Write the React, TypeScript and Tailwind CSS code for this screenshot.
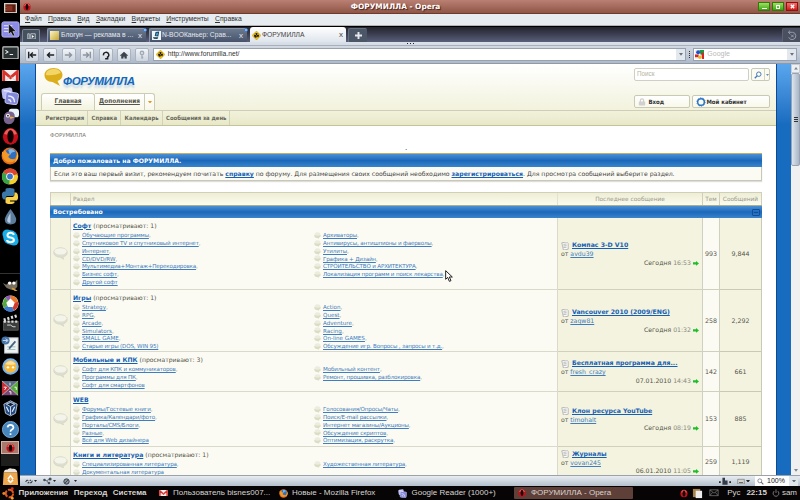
import React from "react";

type Align = { className?: string };

interface Topic {
  title: string;
  author: string;
  day: string;
  time: string;
}

interface Forum {
  name: string;
  viewing?: number;
  height: string;
  left: string[];
  right: string[];
  last: Topic;
  threads: string;
  posts: string;
}

const forums: Forum[] = [
  {
    name: "Софт",
    viewing: 1,
    height: "h-[72px]",
    left: [
      "Обучающие программы",
      "Спутниковое TV и спутниковый интернет",
      "Интернет",
      "CD/DVD/RW",
      "Мультимедиа+Монтаж+Перекодировка",
      "Бизнес софт",
      "Другой софт",
    ],
    right: [
      "Архиваторы",
      "Антивирусы, антишпионы и фаерволы",
      "Утилиты",
      "Графика + Дизайн",
      "СТРОИТЕЛЬСТВО и АРХИТЕКТУРА",
      "Локализация программ и поиск лекарства",
    ],
    last: { title: "Компас 3-D V10", author: "avdu39", day: "Сегодня", time: "16:53" },
    threads: "993",
    posts: "9,844",
  },
  {
    name: "Игры",
    viewing: 1,
    height: "h-[62px]",
    left: ["Strategy", "RPG", "Arcade", "Simulators", "SMALL GAME", "Старые игры (DOS, WIN 95)"],
    right: ["Action", "Quest", "Adventure", "Racing", "On-line GAMES", "Обсуждение игр. Вопросы , запросы и т.д."],
    last: { title: "Vancouver 2010 (2009/ENG)", author: "zaqw81", day: "Сегодня", time: "01:32" },
    threads: "258",
    posts: "2,292",
  },
  {
    name: "Мобильные и КПК",
    viewing: 3,
    height: "h-[40px]",
    left: ["Софт для КПК и коммуникаторов", "Программы для ПК", "Софт для смартфонов"],
    right: ["Мобильный контент", "Ремонт, прошивка, разблокировка"],
    last: { title: "Бесплатная программа для...", author: "fresh_crazy", day: "07.01.2010", time: "14:43" },
    threads: "142",
    posts: "661",
  },
  {
    name: "WEB",
    height: "h-[55px]",
    left: ["Форумы/Гостевые книги", "Графика/Календари/фото", "Порталы/CMS/Блоги", "Разные", "Всё для Web дизайнера"],
    right: [
      "Голосования/Опросы/Чаты",
      "Поиск/E-mail рассылки",
      "Интернет магазины/Аукционы",
      "Обсуждение скриптов",
      "Оптимизация, раскрутка",
    ],
    last: { title: "Клон ресурса YouTube", author: "timohalt", day: "Сегодня", time: "08:19" },
    threads: "153",
    posts: "885",
  },
  {
    name: "Книги и литература",
    viewing: 1,
    height: "h-[31px]",
    left: ["Специализированная литература", "Документальная литература"],
    right: ["Художественная литература"],
    last: { title: "Журналы", author: "vovan245", day: "06.01.2010", time: "11:05" },
    threads: "259",
    posts: "1,119",
  },
];

const Opera = ({ className }: Align) => (
  <svg viewBox="0 0 20 20" className={className}>
    <ellipse cx="10" cy="10" rx="9" ry="9.6" fill="#c4101a" />
    <path d="M2.500 7Q5 .5 10 .5T17.500 7L14 8Q13 2.500 10 2.500T6 8z" fill="#e8605c" />
    <ellipse cx="10" cy="10" rx="3.6" ry="7.4" fill="#0c0202" />
  </svg>
);

const Gmail = ({ className }: Align) => (
  <svg viewBox="0 0 20 14" className={className}>
    <rect width="20" height="14" rx="1.5" fill="#f5f0f0" />
    <path d="M2 14V2l8 7 8-7v12" fill="none" stroke="#d8332c" strokeWidth="3.4" />
    <path d="M4 13l5-5M16 13l-5-5" stroke="#d9c4c2" />
  </svg>
);

const Reader = ({ className }: Align) => (
  <svg viewBox="0 0 20 20" className={className}>
    <rect x="1" y="1" width="12" height="12" rx="2.5" fill="#b9bdf0" transform="rotate(-8 7 7)" />
    <rect x="5" y="6" width="14" height="13" rx="2.5" fill="#8288d8" stroke="#c9cdf6" transform="rotate(8 12 12)" />
    <g fill="none" stroke="#eef" strokeWidth="1.5">
      <path d="M8 10q7 0 7 7M8 14q3 0 3 3M3 4q6 0 8 2" />
    </g>
  </svg>
);

const Firefox = ({ className }: Align) => (
  <svg viewBox="0 0 20 20" className={className}>
    <circle cx="10" cy="10" r="9.4" fill="#e5701a" />
    <circle cx="11" cy="8" r="6.4" fill="#2f6fc0" />
    <path d="M8 3q5-2 8 2l-4 1-2 3z" fill="#7db5e8" />
    <path d="M1 5l2 1 1-3 3 4 3 1-2 3q3 4 9 2-4 6-11 3Q1 13 1 5z" fill="#f39a26" />
    <path d="M17 4q5 8-2 13 4-6 2-13z" fill="#f9c440" />
  </svg>
);

const Radiation = ({ className }: Align) => (
  <svg viewBox="0 0 20 20" className={className}>
    <path d="M10 0l10 10-10 10L0 10z" fill="#f2c313" stroke="#a07a08" strokeWidth=".8" />
    <circle cx="10" cy="10" r="5.500" fill="#201c10" />
    <path d="M9 9L4 8l3-4zM11 9l2-5 3 4zM11 11l3 5H9z" fill="#f2c313" />
    <circle cx="10" cy="10" r="1" fill="#f2c313" />
  </svg>
);

const Bubble = ({ className }: Align) => (
  <svg viewBox="0 0 20 17" className={className}>
    <path
      d="M10 1c5 0 9 2.600 9 6.200S15.500 13.200 13 13.400l1.500 3.100-5-3C4 13.500 1 10.800 1 7.200 1 3.600 5 1 10 1z"
      fill="#deded0"
      stroke="#d2d2c2"
      strokeWidth=".8"
    />
    <ellipse cx="10" cy="5.800" rx="8" ry="4.300" fill="#f4f4ea" />
  </svg>
);

const SmallBubble = ({ className }: Align) => (
  <svg viewBox="0 0 7 7" className={className}>
    <path d="M.2 3h6.600q0 2.500-2 2.800L5 6.800 3 6Q.2 5.800.2 3z" fill="#dcdcc2" />
    <path d="M.5 3Q.5.300 3.500.3t3 2.700Q3.500 4.400.5 3z" fill="#ecece0" />
  </svg>
);

const Caret = ({ className }: Align) => (
  <svg viewBox="0 0 6 4" className={className}>
    <path d="M0 0h6L3 4z" fill="currentColor" />
  </svg>
);

const Pointer = ({ className }: Align) => (
  <svg viewBox="0 0 12 18" className={className}>
    <path d="M1 1v13l3-3 2.500 6 2.500-1-2.500-5.500H11z" fill="#fff" stroke="#111" strokeWidth="1.4" />
  </svg>
);

const dock: { h: string; icon: React.ReactNode }[] = [
  {
    h: "h-[16px]",
    icon: (
      <svg viewBox="0 0 20 16" className="w-[13px]">
        <rect x="1" y="1" width="18" height="14" fill="#5a1c10" stroke="#d8d0c4" strokeWidth="2" />
        <path d="M4 4h9v8H4z" fill="#8c3220" />
        <path d="M3 4v8" stroke="#f0e8e0" strokeDasharray="1 1.500" />
      </svg>
    ),
  },
  {
    h: "h-[27px]",
    icon: (
      <svg viewBox="0 0 20 20" className="w-[19px]">
        <rect x="1" y="2" width="18" height="16" rx="2" fill="#8c8ce8" stroke="#b6b6fa" />
        <path d="M3 6h9M3 9h9M3 12h9" stroke="#e8e8ff" />
        <path d="M8 4v11l2.500-2 2 4 2-1-2-4h3.500z" fill="#111" stroke="#ddd" strokeWidth=".6" />
      </svg>
    ),
  },
  {
    h: "h-[19px]",
    icon: (
      <svg viewBox="0 0 20 16" className="w-[17px]">
        <rect x="1" y="1" width="18" height="14" rx="1" fill="#2b3234" stroke="#c4c8c4" strokeWidth="1.400" />
        <path d="M4 5l3 2-3 2M9 10h4" fill="none" stroke="#f0f0f0" strokeWidth="1.200" />
      </svg>
    ),
  },
  { h: "h-[27px]", icon: <Gmail className="w-[17px]" /> },
  { h: "h-[14px]", icon: <Reader className="h-[18px] w-[18px] shrink-0" /> },
  {
    h: "h-[26px]",
    icon: (
      <svg viewBox="0 0 20 20" className="w-[17px]">
        <rect x="8" y="1" width="12" height="10" rx="3" fill="#e8f2f8" />
        <path d="M2 12q0-8 7-8 6 0 6 6 0 9-7 9-6 0-6-7z" fill="#79648f" />
        <circle cx="7" cy="9" r="2.300" fill="#fff" />
        <circle cx="7" cy="9" r="1" fill="#111" />
        <path d="M9 10l6 1-5 2z" fill="#f0b040" />
      </svg>
    ),
  },
  { h: "h-[15px]", icon: <Opera className="h-[17px] w-[17px] shrink-0" /> },
  { h: "h-[24px]", icon: <Firefox className="w-[18px]" /> },
  {
    h: "h-[16px]",
    icon: (
      <svg viewBox="0 0 20 20" className="h-[17px] w-[18px] shrink-0">
        <circle cx="10" cy="10" r="9.500" fill="#f2cf2e" />
        <path d="M10 10L2 5q3-5 9-4.500Q17 1 19 7z" fill="#dd4433" />
        <path d="M10 10l-1 9.500Q0 18 .5 9q0-2 1.500-4z" fill="#39a34a" />
        <circle cx="10" cy="10" r="4.500" fill="#f6f6f6" />
        <circle cx="10" cy="10" r="3.400" fill="#3b78c8" />
      </svg>
    ),
  },
  {
    h: "h-[24px]",
    icon: (
      <svg viewBox="0 0 20 20" className="w-[18px]">
        <path d="M5 5V2.500Q5 1 10 1t5 2v5q0 2-2 2H7q-2 0-2 4H3q-2-1-2-5t3-4h6" fill="#3b77a8" />
        <path d="M15 6h2q2 1 2 5t-3 4h-6v1h5v1q0 2-5 2t-5-2v-4q0-2 2-2h6q2 0 2-3z" fill="#f7d04c" />
      </svg>
    ),
  },
  {
    h: "h-[19px]",
    icon: (
      <svg viewBox="0 0 16 20" className="w-[13px]">
        <path d="M8 0q7 9 7 13 0 6-7 6t-7-6Q1 9 8 0z" fill="#5d7d9c" />
        <path d="M8 5q-4 6-4 9 0 3 4 3z" fill="#b7cbe0" />
      </svg>
    ),
  },
  {
    h: "h-[21px]",
    icon: (
      <svg viewBox="0 0 20 20" className="w-[17px]">
        <circle cx="6" cy="6" r="5.500" fill="#18aeea" />
        <circle cx="14" cy="14" r="5.500" fill="#18aeea" />
        <circle cx="10" cy="10" r="8.500" fill="#18aeea" />
        <path d="M14 7q-1-2.500-4-2.500T6.500 7t3.500 3 4 3-4 2.500T6 13" fill="none" stroke="#fff" strokeWidth="2.400" />
      </svg>
    ),
  },
];

const lowerDock: { h: string; icon: React.ReactNode }[] = [
  {
    h: "h-[21px]",
    icon: (
      <svg viewBox="0 0 20 16" className="w-[17px]">
        <path d="M1 6l4 2 3-3 6 1 4-4v8q-2 4-6 4-6-1-8-4z" fill="#766f60" />
        <circle cx="9" cy="6" r="2" fill="#fff" />
        <circle cx="14" cy="6" r="2" fill="#fff" />
        <path d="M12 12l6 4" stroke="#d59a3a" strokeWidth="2" />
      </svg>
    ),
  },
  {
    h: "h-[16px]",
    icon: (
      <svg viewBox="0 0 20 20" className="h-[17px] w-[17px] shrink-0">
        <circle cx="10" cy="10" r="9.500" fill="#eee" />
        <path d="M10 10V.5Q17 1 19 8z" fill="#e8792a" />
        <path d="M10 10l9-2q1 7-5 10.500z" fill="#d23a2e" />
        <path d="M10 10l4 8.500q-7 3-12-3z" fill="#3c7bd0" />
        <path d="M10 10l-8 5.500Q-1 8 4 3z" fill="#54a83c" />
        <path d="M10 10L4 3q2-2.500 6-2.500z" fill="#8c58b4" />
        <path d="M10 4l5 5-2 5H7L5 9z" fill="#fff" />
      </svg>
    ),
  },
  {
    h: "h-[22px]",
    icon: (
      <svg viewBox="0 0 20 20" className="w-[17px]">
        <rect x="2" y="9" width="17" height="10" fill="#3c3e3e" stroke="#8a8a8a" strokeWidth=".6" />
        <path d="M2 7l16-5" stroke="#ddd" strokeWidth="3.500" strokeDasharray="2.500 2" />
        <path d="M2 9h17" stroke="#ddd" strokeWidth="2.500" strokeDasharray="2.500 2" />
        <path d="M6 13h4l3 2h3" stroke="#eee" fill="none" />
      </svg>
    ),
  },
  {
    h: "h-[23px]",
    icon: (
      <svg viewBox="0 0 20 20" className="w-[18px]">
        <rect x="4" y="2" width="15" height="17" fill="#eef1f2" stroke="#b8c0c6" />
        <circle cx="5" cy="5" r="4.500" fill="#4474a8" />
        <path d="M2 5h5M5 3l3 2-3 2" stroke="#cfe0f2" fill="none" />
        <path d="M7 12h9M7 15h9" stroke="#9bb" />
        <path d="M16 6l-7 8" stroke="#46637f" strokeWidth="2" />
      </svg>
    ),
  },
  {
    h: "h-[21px]",
    icon: (
      <svg viewBox="0 0 20 20" className="w-[17px]">
        <circle cx="10" cy="10" r="8.500" fill="#f7b93a" stroke="#79b4ee" strokeWidth="2.400" />
        <path d="M4 7q6-7 12 0-6 2-12 0z" fill="#fbe0a0" />
        <circle cx="7" cy="11" r="1.400" fill="#fff" />
        <circle cx="13" cy="11" r="1.400" fill="#fff" />
      </svg>
    ),
  },
  {
    h: "h-[22px]",
    icon: (
      <svg viewBox="0 0 20 18" className="w-[18px]">
        <path d="M1 1l9 8-9 8z" fill="#c82c34" />
        <path d="M19 1l-9 8 9 8z" fill="#58a83c" />
        <path d="M1 1h18l-9 8z" fill="#5a6a84" />
        <path d="M1 17h18l-9-8z" fill="#774878" />
        <path d="M1 1l18 16M19 1L1 17" stroke="#ddd" strokeWidth=".8" />
        <path d="M10 3v3M3 8h3l-2 3M15 8h2v3M9 13h2v3" stroke="#fff" fill="none" />
      </svg>
    ),
  },
  {
    h: "h-[19px]",
    icon: (
      <svg viewBox="0 0 18 20" className="w-[15px]">
        <path d="M9 1l8 4-2 11-6 3-6-3L1 5z" fill="#234a82" stroke="#cfdcea" />
        <path d="M9 3l5 2-5 3-5-3zM9 8v10" fill="#10203a" stroke="#e4eef8" />
        <path d="M4 8l3 6M14 8l-3 6" stroke="#dbe8f5" strokeWidth="1.500" />
      </svg>
    ),
  },
  {
    h: "h-[23px]",
    icon: (
      <svg viewBox="0 0 20 20" className="w-[17px]">
        <circle cx="10" cy="10" r="9.500" fill="#4585bd" stroke="#85b5de" />
        <path d="M6.500 7.500Q7 4.500 10 4.500t3.500 3Q13.500 9 11 10.500q-1 .7-1 2.200M10 14.500v2" fill="none" stroke="#fff" strokeWidth="2" />
      </svg>
    ),
  },
];

const Dock = () => (
  <div className="flex h-[486px] w-[20px] shrink-0 flex-col bg-black">
    {dock.map((d, i) => (
      <div key={i} className={`flex shrink-0 items-center justify-center ${d.h}`}>
        {d.icon}
      </div>
    ))}
    <div className="h-[26px] shrink-0 border-b border-[#333]" />
    {lowerDock.map((d, i) => (
      <div key={i} className={`flex shrink-0 items-center justify-center ${d.h}`}>
        {d.icon}
      </div>
    ))}
    <div className="mx-px flex h-[13px] shrink-0 items-center justify-center border border-[#d8b0a4] bg-[#a8786c]">
      <Opera className="h-[10px] w-[9px]" />
    </div>
    <div className="mx-px h-[12px] shrink-0 bg-[#1e1e1c]" />
    <div className="flex flex-1 items-center justify-center">
      <svg viewBox="0 0 20 20" className="w-[17px]">
        <path d="M2 5h16l1 15H1z" fill="#eda64c" />
        <path d="M2 5q1-4 4-3 3-3 6-1 5-1 6 4z" fill="#ece6dc" />
        <path d="M7 13l3-4 3 4M13 14l-3 3-3-3" fill="none" stroke="#fff" strokeWidth="1.800" />
      </svg>
    </div>
  </div>
);

const TitleBar = () => (
  <div className="flex h-[14px] shrink-0 items-center border-b border-[#71392c] bg-linear-to-b from-[#b98073] via-[#a56b5c] to-[#8d5647] pr-[2px] pl-[3px]">
    <Opera className="h-[8px] w-[8px]" />
    <div className="flex-1 pl-[2px] text-center font-['DejaVu_Sans'] text-[7.400px] leading-none font-bold whitespace-nowrap text-white [text-shadow:1px_1px_1px_#4a2018]">
      ФОРУМИЛЛА - Opera
    </div>
    <div className="flex gap-[2px]">
      <div className="flex h-[9px] w-[12px] items-end justify-center border border-[#2f7a08] bg-linear-to-b from-[#9fe060] to-[#3ba40c] pb-px">
        <div className="h-px w-[5px] bg-white" />
      </div>
      <div className="flex h-[9px] w-[12px] items-center justify-center border border-[#2f7a08] bg-linear-to-b from-[#9fe060] to-[#3ba40c]">
        <div className="h-[4px] w-[4px] border border-white" />
      </div>
      <div className="flex h-[9px] w-[12px] items-center justify-center border border-[#8e1010] bg-linear-to-b from-[#f07070] to-[#cc1414]">
        <svg viewBox="0 0 6 6" className="w-[5px]">
          <path d="M1 1l4 4M5 1L1 5" stroke="#fff" strokeWidth="1.600" />
        </svg>
      </div>
    </div>
  </div>
);

const menu = ["Файл", "Правка", "Вид", "Закладки", "Виджеты", "Инструменты", "Справка"];

const MenuBar = () => (
  <div className="flex h-[12px] shrink-0 items-center gap-[6.300px] border-b border-[#b4b4b2] bg-[#e6ecf0] pl-[5px] text-[6.800px] leading-none text-[#333]">
    {menu.map((m) => (
      <span key={m} className="inline-block first-letter:underline">
        {m}
      </span>
    ))}
  </div>
);

const TabBar = () => (
  <div className="flex h-[16px] shrink-0 items-end border-t border-black bg-linear-to-b from-[#23242e] to-[#5a5f7b] pl-[2px]">
    <div className="flex h-[13px] w-[18px] items-center justify-center rounded-t-[2px] border border-b-0 border-[#7c8794] bg-[#465160]">
      <svg viewBox="0 0 12 9" className="w-[9px]">
        <path d="M1 1h2v7H1zM5 1h6v7H5z" fill="none" stroke="#d6dce2" />
        <path d="M6.500 2.500v4l3-2z" fill="#fff" />
      </svg>
    </div>
    <div className="relative ml-[7px] flex h-[14px] w-[99px] items-center rounded-t-[2px] border-t border-l border-[#8b96a8] bg-linear-to-b from-[#6c7a8f] to-[#46536b] pr-[4px] pl-[2px] text-[6.800px] text-[#e4e8ee]">
      <div className="h-[9px] w-[9px] bg-linear-to-br from-[#fbf6c0] to-[#c8a41c]" />
      <span className="ml-[2px] flex-1 whitespace-nowrap">Блогун — реклама в ...</span>
      <span className="text-[8px]">x</span>
      <div className="absolute -top-px -right-px h-[4px] w-[4px] rounded-full border border-[#3f78c8] bg-[#a8ccf4]" />
    </div>
    <div className="relative ml-[3px] flex h-[14px] w-[98px] items-center rounded-t-[2px] border-t border-l border-[#8b96a8] bg-linear-to-b from-[#6c7a8f] to-[#46536b] pr-[4px] pl-[2px] text-[6.700px] text-[#e4e8ee]">
      <svg viewBox="0 0 10 10" className="w-[9px]">
        <rect width="10" height="10" fill="#eef6fa" />
        <path d="M4 1l4-.5L7 6 3 5.500zM1 7l6 0-1 2-4-.5z" fill="#1b3c56" />
        <path d="M5 2h2L6 5H4z" fill="#46a4d4" />
      </svg>
      <span className="ml-[1px] flex-1 whitespace-nowrap">N-BOOКаньер: Срав...</span>
      <span className="text-[8px]">x</span>
      <div className="absolute -top-px -right-px h-[4px] w-[4px] rounded-full border border-[#3f78c8] bg-[#a8ccf4]" />
    </div>
    <div className="ml-[3px] flex h-[15px] w-[96px] items-center rounded-t-[3px] bg-linear-to-b from-white to-[#dfe5ec] pt-px pr-[3px] pl-[2px] text-[6.700px] text-[#444]">
      <Radiation className="w-[9px]" />
      <span className="ml-[1px] flex-1">ФОРУМИЛЛА</span>
      <span className="text-[8px]">x</span>
    </div>
    <div className="ml-[2px] flex h-[14px] w-[19px] items-center justify-center rounded-t-[2px] border-t border-l border-[#66707e] bg-[#4b5666]">
      <svg viewBox="0 0 8 8" className="w-[7px]">
        <path d="M4 0v8M0 4h8" stroke="#e4e8ee" strokeWidth="2.200" />
      </svg>
    </div>
    <div className="flex-1" />
    <div className="flex h-[14px] w-[18px] items-center justify-center rounded-tl-[2px] border-l border-[#5c6472] bg-[#4a5060]">
      <svg viewBox="0 0 12 12" className="w-[11px]">
        <path d="M3 2.500h4a4 4 0 1 1-4 5.500M4.500.5l-2 2 2 2M5.500 5l3 3M8.500 5l-3 3" fill="none" stroke="#9aa2ae" />
      </svg>
    </div>
  </div>
);

const tools = [
  { d: "M2 2v8M11 6H4M7 3L4 6l3 3", c: "#1d2228", f: "none" },
  { d: "M11 6H3M6 3L3 6l3 3", c: "#1d2228", f: "none" },
  { d: "M1 6h8M6 3l3 3-3 3", c: "#8c95a0", f: "none" },
  { d: "M10 2v8M1 6h7M5 3l3 3-3 3", c: "#8c95a0", f: "none" },
  { d: "M3 6.500a3.200 3.200 0 1 1 4 2.500M5 10.500h3V7.500", c: "#1d2228", f: "none" },
  { d: "M1.500 6.500L6 2.500l4.500 4H9V10H7V8H5v2H3V6.500z", c: "#3b434c", f: "#3b434c" },
  { d: "M6 5.500v5M4 3.500a2 2 0 1 1 4 0 2 2 0 1 1-4 0M6 9h1.500", c: "#a2abb5", f: "none" },
];

const AddressBar = () => (
  <div className="flex h-[22px] shrink-0 flex-col border-b border-[#8f9aa5] bg-linear-to-b from-[#dbe1e9] to-[#aeb9ca]">
    <div className="flex h-[4px] shrink-0 items-start justify-center gap-[2px] border-b border-[#a8b0ba] pt-px">
      <div className="h-px w-px bg-[#222]" />
      <div className="h-px w-px bg-[#222]" />
      <div className="h-px w-px bg-[#222]" />
    </div>
    <div className="flex flex-1 items-center pr-[3px] pl-[5px]">
      <div className="flex gap-[4.400px]">
        {tools.map((t, i) => (
          <div
            key={i}
            className="flex h-[14px] w-[14px] items-center justify-center rounded-[2px] border border-[#aab3be] bg-linear-to-b from-[#f2f5f8] to-[#ccd4de]"
          >
            <svg viewBox="0 0 12 12" className="w-[10px]">
              <path d={t.d} fill={t.f} stroke={t.c} strokeWidth={t.f === "none" ? 1.7 : 0.6} />
            </svg>
          </div>
        ))}
      </div>
      <div className="ml-[4px] flex h-[13px] w-[533px] items-center border border-[#98a2ae] bg-white pl-[2px] text-[6.750px] text-[#333]">
        <Radiation className="w-[9px]" />
        <span className="ml-[2.500px] flex-1">http://www.forumilla.net/</span>
        <div className="flex h-full w-[9px] items-center justify-center bg-[#e3e8ee] text-[#69727c]">
          <Caret className="w-[4px]" />
        </div>
      </div>
      <div className="ml-[3px] flex h-[8px] flex-col justify-between">
        <div className="h-px w-px bg-[#333]" />
        <div className="h-px w-px bg-[#333]" />
        <div className="h-px w-px bg-[#333]" />
        <div className="h-px w-px bg-[#333]" />
      </div>
      <div className="ml-[3px] flex h-[13px] flex-1 items-center border border-[#98a2ae] bg-white pl-px text-[#b9b9b9]">
        <svg viewBox="0 0 10 10" className="w-[9px]">
          <rect width="10" height="10" fill="#e9eef6" />
          <path d="M5 0h5v5H6z" fill="#139c40" />
          <path d="M7 3h3v7H8z" fill="#d7261e" />
          <path d="M0 5h4v3H0z" fill="#d7261e" />
          <circle cx="3.500" cy="2.500" r="2.200" fill="#2250c4" />
          <circle cx="5.500" cy="8" r="2" fill="#f3b51c" />
        </svg>
        <span className="ml-[3px] flex-1 text-[7px]">Google</span>
        <div className="flex h-full w-[9px] items-center justify-center bg-[#e3e8ee] text-[#69727c]">
          <Caret className="w-[4px]" />
        </div>
      </div>
    </div>
  </div>
);

const SiteHeader = () => (
  <div className="flex h-[62px] shrink-0 flex-col border-b border-[#c4c49c] bg-linear-to-b from-white to-[#eeeed2]">
    <div className="flex h-[46px] justify-between pr-[6px] pl-[5px]">
      <div className="flex flex-col justify-between">
        <div className="flex pt-[3px] pl-[2px]">
          <svg viewBox="0 0 20 20" className="h-[20px] w-[21px] shrink-0">
            <path d="M10 1c5 0 9 2.800 9 7 0 3-2 5-5 6l2.500 5L9 15C4 15 1 12 1 8c0-4 4-7 9-7z" fill="#dcae1c" />
            <path d="M9 2c4-.5 8 1 8 4Q10 9 2.500 8 2 3 9 2z" fill="#f2d668" />
          </svg>
          <div className="-ml-[1px] pt-[7px] text-[11.500px] leading-[14px] font-bold tracking-[-0.350px] whitespace-nowrap text-[#1468bc] italic [text-shadow:0_3px_2px_#c4d6e4]">
            ФОРУМИЛЛА
          </div>
        </div>
        <div className="flex h-[17px] items-center font-['DejaVu_Sans'] text-[6.400px] font-bold text-[#55554a] font-stretch-condensed">
          <div className="flex h-full w-[54px] items-center justify-center rounded-t-[3px] border border-b-0 border-[#cdcdb4] bg-linear-to-b from-white to-[#f3f3de]">
            <span className="underline">Главная</span>
          </div>
          <div className="flex h-full w-[50px] items-center justify-center border-t border-r border-[#cdcdb4] bg-linear-to-b from-white to-[#f8f8ea]">
            <span className="underline">Дополнения</span>
          </div>
          <div className="flex h-full w-[10px] items-center justify-center rounded-tr-[3px] border-t border-r border-[#cdcdb4] bg-linear-to-b from-white to-[#f8f8ea] text-[#e09a20]">
            <Caret className="w-[4px]" />
          </div>
        </div>
      </div>
      <div className="flex flex-col pt-[4px]">
        <div className="flex gap-[2px] text-[6.300px]">
          <div className="flex h-[13px] w-[115px] items-center rounded-[2px] border border-[#cfcfc6] bg-white pb-[2px] pl-[2px] text-[#b4b49e]">
            Поиск
          </div>
          <div className="flex h-[13px] w-[19px] items-center rounded-[2px] border border-[#c9c9b8] bg-[#fbfbf2] pl-[2px] text-[#6a8cba]">
            <svg viewBox="0 0 10 10" className="w-[8px]">
              <circle cx="6" cy="4" r="2.800" fill="none" stroke="#4477bb" strokeWidth="1.200" />
              <path d="M4 6L1 9" stroke="#4477bb" strokeWidth="1.600" />
            </svg>
            <div className="ml-[2px] flex h-full flex-1 items-center justify-center border-l border-[#d4d4c4]">
              <Caret className="w-[3px]" />
            </div>
          </div>
        </div>
        <div className="mt-[14px] flex gap-[1.500px] font-['DejaVu_Sans'] text-[6px] font-bold text-[#333] font-stretch-condensed">
          <div className="flex h-[13px] w-[56px] items-center rounded-[2px] border border-[#c9c9b4] bg-linear-to-b from-white to-[#f8f8ea] pl-[3px]">
            <svg viewBox="0 0 10 10" className="w-[8px]">
              <path d="M3 5V3q0-2 2-2t2 2v2" fill="none" stroke="#cfcfcf" strokeWidth="1.500" />
              <rect x="1" y="4.500" width="8" height="5" rx="1" fill="#d0d0d0" />
            </svg>
            <span className="ml-[2.500px]">Вход</span>
          </div>
          <div className="flex h-[13px] w-[78.500px] items-center rounded-[2px] border border-[#c9c9b4] bg-linear-to-b from-white to-[#f8f8ea] pl-[3px] whitespace-nowrap">
            <svg viewBox="0 0 12 12" className="w-[10px]">
              <circle cx="6" cy="6" r="4" fill="none" stroke="#2a74c4" strokeWidth="1.800" />
              <circle cx="6" cy="6" r="5" fill="none" stroke="#2a74c4" strokeDasharray="1.600 1.500" />
            </svg>
            <span className="ml-px">Мой кабинет</span>
          </div>
        </div>
      </div>
    </div>
    <div className="flex flex-1 items-stretch border-t border-[#cdcdb8] bg-linear-to-b from-[#f2f2dc] to-[#e8e8c8] pl-[6px] font-['DejaVu_Sans'] text-[5.900px] font-bold text-[#66665a] font-stretch-condensed">
      {["Регистрация", "Справка", "Календарь", "Сообщения за день"].map((t) => (
        <div key={t} className="flex items-center border-r border-[#d2d2b8] pr-[3px] pl-[3.500px] whitespace-nowrap">
          {t}
        </div>
      ))}
    </div>
  </div>
);

const Welcome = () => (
  <div className="flex h-[28px] shrink-0 flex-col border border-t-0 border-[#c8c8b4] bg-[#fbfbf3] shadow-[0_1px_1px_#ddd]">
    <div className="-mx-px flex h-[14px] items-center border-t border-[#c4ae60] bg-linear-to-b from-[#4a90d6] via-[#1a68ba] to-[#3a84cc] pl-[3px] text-[6.100px] font-bold text-white">
      Добро пожаловать на ФОРУМИЛЛА.
    </div>
    <div className="flex flex-1 items-center pl-[3px] text-[6.170px] whitespace-pre text-[#444]">
      Если это ваш первый визит, рекомендуем почитать <b className="text-[#1560b4] underline">справку</b> по форуму. Для
      размещения своих сообщений необходимо <b className="text-[#1560b4] underline">зарегистрироваться</b>. Для просмотра
      сообщений выберите раздел.
    </div>
  </div>
);

const isCyrillic = (s: string) => /^[а-яё]/i.test(s);

const SubForums = ({ items, last }: { items: string[]; last: boolean }) => (
  <div className="flex flex-col">
    {items.map((s, i) => (
      <div key={s} className="flex h-[7.800px] items-center whitespace-nowrap">
        <SmallBubble className="mr-[2px] h-[7px] w-[7px]" />
        <span className={`text-[#3f7cc0] underline ${isCyrillic(s) ? "tracking-[-0.170px]" : "tracking-normal"}`}>
          {s}
        </span>
        {last && i === items.length - 1 ? "" : ","}
      </div>
    ))}
  </div>
);

const ForumRow = ({ forum }: { forum: Forum }) => (
  <div className={`flex shrink-0 ${forum.height}`}>
    <div className="flex w-[21px] shrink-0 items-center justify-center border-r border-b border-l border-[#d6d6c6] bg-[#f3f3df]">
      <Bubble className="w-[15px]" />
    </div>
    <div className="flex w-[487px] shrink-0 flex-col border-r border-b border-[#d9d9cc] bg-[#fbfbf3] pt-[2px] pl-[2px]">
      <div className="mb-px flex h-[10.600px] items-center gap-[2px] text-[6.100px] text-[#55554a]">
        <b className="text-[#1560b4] underline">{forum.name}</b>
        {forum.viewing && <span>(просматривают: {forum.viewing})</span>}
      </div>
      <div className="grid grid-cols-[241px_1fr] text-[5.600px] text-[#8aa]">
        <SubForums items={forum.left} last />
        <SubForums items={forum.right} last={false} />
      </div>
    </div>
    <div className="flex w-[145px] shrink-0 flex-col justify-center border-r border-b border-[#d0d0be] bg-[#f3f3df] pt-[2px] pr-[3px] pl-[3px] text-[6.200px] leading-[8.700px] text-[#55554a]">
      <div className="flex items-center">
        <svg viewBox="0 0 10 10" className="w-[8px]">
          <path d="M1 1l6-1 2 2v7l-6 1z" fill="#fafafa" stroke="#9a9a98" strokeWidth=".8" />
          <path d="M3 3l4-.5M3 5l4-.5M3 7l4-.5" stroke="#888" strokeWidth=".7" />
        </svg>
        <b className="ml-[3px] whitespace-nowrap text-[#1560b4] underline">{forum.last.title}</b>
      </div>
      <div>
        от <span className="text-[#3f7cc0] underline">{forum.last.author}</span>
      </div>
      <div className="flex items-center justify-end gap-[2px]">
        <span>
          {forum.last.day} <span className="text-[#88887c]">{forum.last.time}</span>
        </span>
        <svg viewBox="0 0 10 8" className="w-[6px]">
          <path d="M0 2h5V0l5 4-5 4V6H0z" fill="#1fbe2a" />
        </svg>
      </div>
    </div>
    <div className="flex w-[17px] shrink-0 items-center justify-center border-r border-b border-[#d0d0be] bg-[#fbfbf3] text-[6.300px] text-[#55554a]">
      {forum.threads}
    </div>
    <div className="flex flex-1 items-center justify-center border-r border-b border-[#c9c9b6] bg-[#f3f3df] text-[6.300px] text-[#55554a]">
      {forum.posts}
    </div>
  </div>
);

const ForumTable = () => (
  <div className="mt-[11px] flex flex-col">
    <div className="flex h-[13px] shrink-0 border-t border-l border-[#cfcfba] bg-linear-to-b from-[#eeeed4] to-[#fbfbf0] text-[5.850px] text-[#98988a]">
      <div className="w-[20px] border-r border-[#d6d6c0]" />
      <div className="flex w-[487px] items-center border-r border-[#e2e2d2] pl-[2px]">Раздел</div>
      <div className="flex w-[145px] items-center justify-center border-r border-[#cfcfba]">Последнее сообщение</div>
      <div className="flex w-[17px] items-center justify-center border-r border-[#cfcfba]">Тем</div>
      <div className="flex flex-1 items-center justify-center border-r border-[#cfcfba]">Сообщений</div>
    </div>
    <div className="flex h-[13px] shrink-0 items-center justify-between border-t border-[#a8b090] bg-linear-to-b from-[#4a90d6] via-[#1a68ba] to-[#3a84cc] pr-[2px] pl-[3px] text-[6.150px] font-bold text-white">
      Востребовано
      <div className="flex h-[7px] w-[8px] items-center justify-center rounded-[1px] border border-[#0f4e98]">
        <div className="h-px w-[4px] bg-[#0f4e98]" />
      </div>
    </div>
    {forums.map((f) => (
      <ForumRow key={f.name} forum={f} />
    ))}
  </div>
);

const Page = () => (
  <div className="flex h-[411px] shrink-0 overflow-hidden bg-[#186cc0]">
    <div className="w-[16px] shrink-0 border-r border-[#0e4a94] bg-linear-to-b from-[#5aa6ee] to-[#186cc0] to-[60px]" />
    <div className="relative flex w-[740px] shrink-0 flex-col bg-white">
      <SiteHeader />
      <div className="flex flex-col px-[14px] font-['DejaVu_Sans']">
        <div className="flex h-[27px] shrink-0 items-start justify-between pt-[5px] text-[5.400px] leading-[9px] text-[#77776c]">
          ФОРУМИЛЛА
        </div>
        <div className="-mt-[10px] h-[10px] shrink-0 text-center text-[7px] leading-[10px] text-[#222]">.</div>
        <Welcome />
        <ForumTable />
      </div>
      <Pointer className="absolute top-[206px] left-[409px] w-[8px]" />
    </div>
    <div className="w-[15px] shrink-0 border-l border-[#0e4a94] bg-linear-to-b from-[#5aa6ee] to-[#186cc0] to-[60px]" />
    <div className="flex flex-1 flex-col items-center justify-between bg-[#f0f0f0] text-[#7c8692]">
      <div className="flex h-[9px] w-full items-center justify-center border border-[#c8ced4] bg-[#eef0f2]">
        <Caret className="w-[4px] rotate-180" />
      </div>
      <div className="flex h-[93px] w-full flex-col items-center justify-center gap-px rounded-[2px] border border-[#98a4b2] bg-linear-to-r from-[#dde4ec] to-[#a9b6c6]">
        <div className="h-px w-[4px] bg-[#333]" />
        <div className="h-px w-[4px] bg-[#333]" />
        <div className="h-px w-[4px] bg-[#333]" />
      </div>
      <div className="flex-1" />
      <Caret className="mb-[3px] w-[4px]" />
    </div>
  </div>
);

const StatusBar = () => (
  <div className="flex h-[11px] shrink-0 items-center border-t border-[#9aa2aa] bg-linear-to-b from-[#e8edf2] to-[#b4c0cc] pr-[2px] pl-[5px] text-[#222]">
    <svg viewBox="0 0 12 10" className="w-[8px]">
      <path d="M1 6q2-4 4-2M4 8l2-2M7 7q3 1 4-3M7 4l2-1" fill="none" stroke="#333b44" strokeWidth="1.600" />
    </svg>
    <Caret className="ml-px w-[3px]" />
    <svg viewBox="0 0 12 10" className="ml-[6px] w-[9px]">
      <path d="M1 4l4 1 5-3M5 5l3 4" stroke="#444d58" fill="none" />
      <circle cx="2" cy="4" r="1.700" fill="#444d58" />
      <circle cx="9.500" cy="2.500" r="2" fill="#444d58" />
      <circle cx="8" cy="8" r="1.700" fill="#444d58" />
    </svg>
    <Caret className="ml-px w-[3px]" />
    <svg viewBox="0 0 10 10" className="ml-[7px] w-[7px]">
      <circle cx="5" cy="5" r="3.800" fill="#8a929c" stroke="#333b44" strokeWidth="1.400" />
      <path d="M3 7l4-4" stroke="#222" />
    </svg>
    <Caret className="ml-[4px] w-[3px]" />
    <div className="flex-1" />
    <svg viewBox="0 0 14 10" className="w-[12px]">
      <path d="M4 1h3v3h3v5H4z" fill="#333c48" />
      <path d="M0 6h2M12 6h2" stroke="#222" strokeWidth="2" />
    </svg>
    <svg viewBox="0 0 12 10" className="ml-[6px] w-[8px]">
      <path d="M1 2h10v7H1z" fill="#d4d4d0" stroke="#777" />
      <path d="M3 7h6" stroke="#555" strokeWidth="1.500" />
    </svg>
    <Caret className="ml-px w-[4px]" />
    <div className="ml-[5px] flex h-[10px] w-[43px] items-center bg-white pl-[2px] text-[7px]">
      <svg viewBox="0 0 10 10" className="w-[7px]">
        <circle cx="4" cy="4" r="2.800" fill="none" stroke="#667" />
        <path d="M6 6l3 3" stroke="#667" strokeWidth="1.500" />
      </svg>
      <span className="ml-[3px] flex-1">100%</span>
      <div className="flex h-full w-[9px] items-center justify-center bg-[#dfe6ec] text-[#69727c]">
        <Caret className="w-[4px]" />
      </div>
    </div>
  </div>
);

const Panel = () => (
  <div className="flex h-[14px] items-center bg-[#060404] pl-[2px] text-[8px] leading-none whitespace-nowrap text-[#d8d4d0]">
    <svg viewBox="0 0 14 14" className="w-[13px]">
      <circle cx="8" cy="7" r="4" fill="none" stroke="#e0561e" strokeWidth="2.200" strokeDasharray="7 1.400" />
      <circle cx="2" cy="7" r="1.600" fill="#e8862e" />
      <circle cx="11" cy="2" r="1.600" fill="#d8301c" />
      <circle cx="11" cy="12" r="1.600" fill="#f0a030" />
    </svg>
    <div className="ml-[3.500px] flex w-[140.500px] gap-[5.500px] font-bold">
      <span>Приложения</span>
      <span>Переход</span>
      <span>Система</span>
    </div>
    <div className="flex w-[120px] items-center">
      <Gmail className="w-[9px]" />
      <span className="ml-[5px]">Пользователь bisnes007...</span>
    </div>
    <div className="flex w-[119px] items-center">
      <Firefox className="w-[9px]" />
      <span className="ml-[4px]">Новые - Mozilla Firefox</span>
    </div>
    <div className="flex w-[116px] items-center">
      <Reader className="w-[9px]" />
      <span className="ml-[4.500px]">Google Reader (1000+)</span>
    </div>
    <div className="flex h-[12px] w-[119px] items-center rounded-[1px] bg-[#5f4039] pl-[4px]">
      <Opera className="h-[8px] w-[8px]" />
      <span className="ml-[5px]">ФОРУМИЛЛА - Opera</span>
    </div>
    <div className="flex-1" />
    <Opera className="h-[9px] w-[8px]" />
    <svg viewBox="0 0 12 12" className="ml-[4px] w-[11px]">
      <path d="M1 1h8v9H1z" fill="#a8804c" />
      <path d="M4 3h7v8H4z" fill="#ececec" />
    </svg>
    <svg viewBox="0 0 12 9" className="ml-[6px] w-[10px]">
      <path d="M1 1h10v7H1zl5 4 5-4M1 8l3.500-4M11 8L7.500 4" fill="none" stroke="#777" strokeWidth=".9" />
    </svg>
    <span className="ml-[8px]">Рус</span>
    <b className="ml-[6px]">22:15</b>
    <svg viewBox="0 0 10 10" className="ml-[5px] w-[8px]">
      <path d="M3 2.500a3.600 3.600 0 1 0 4 0M5 .5V5" fill="none" stroke="#777" strokeWidth="1.200" />
    </svg>
    <span className="mr-[3px] ml-[2px]">sam</span>
  </div>
);

const App: React.FunctionComponent = () => {
  return (
    <div className="flex h-[500px] w-[800px] flex-col overflow-hidden bg-black font-['Liberation_Sans',sans-serif]">
      <div className="flex h-[486px] shrink-0">
        <Dock />
        <div className="flex w-[780px] shrink-0 flex-col">
          <TitleBar />
          <MenuBar />
          <TabBar />
          <AddressBar />
          <Page />
          <StatusBar />
        </div>
      </div>
      <Panel />
    </div>
  );
};

export default App;
